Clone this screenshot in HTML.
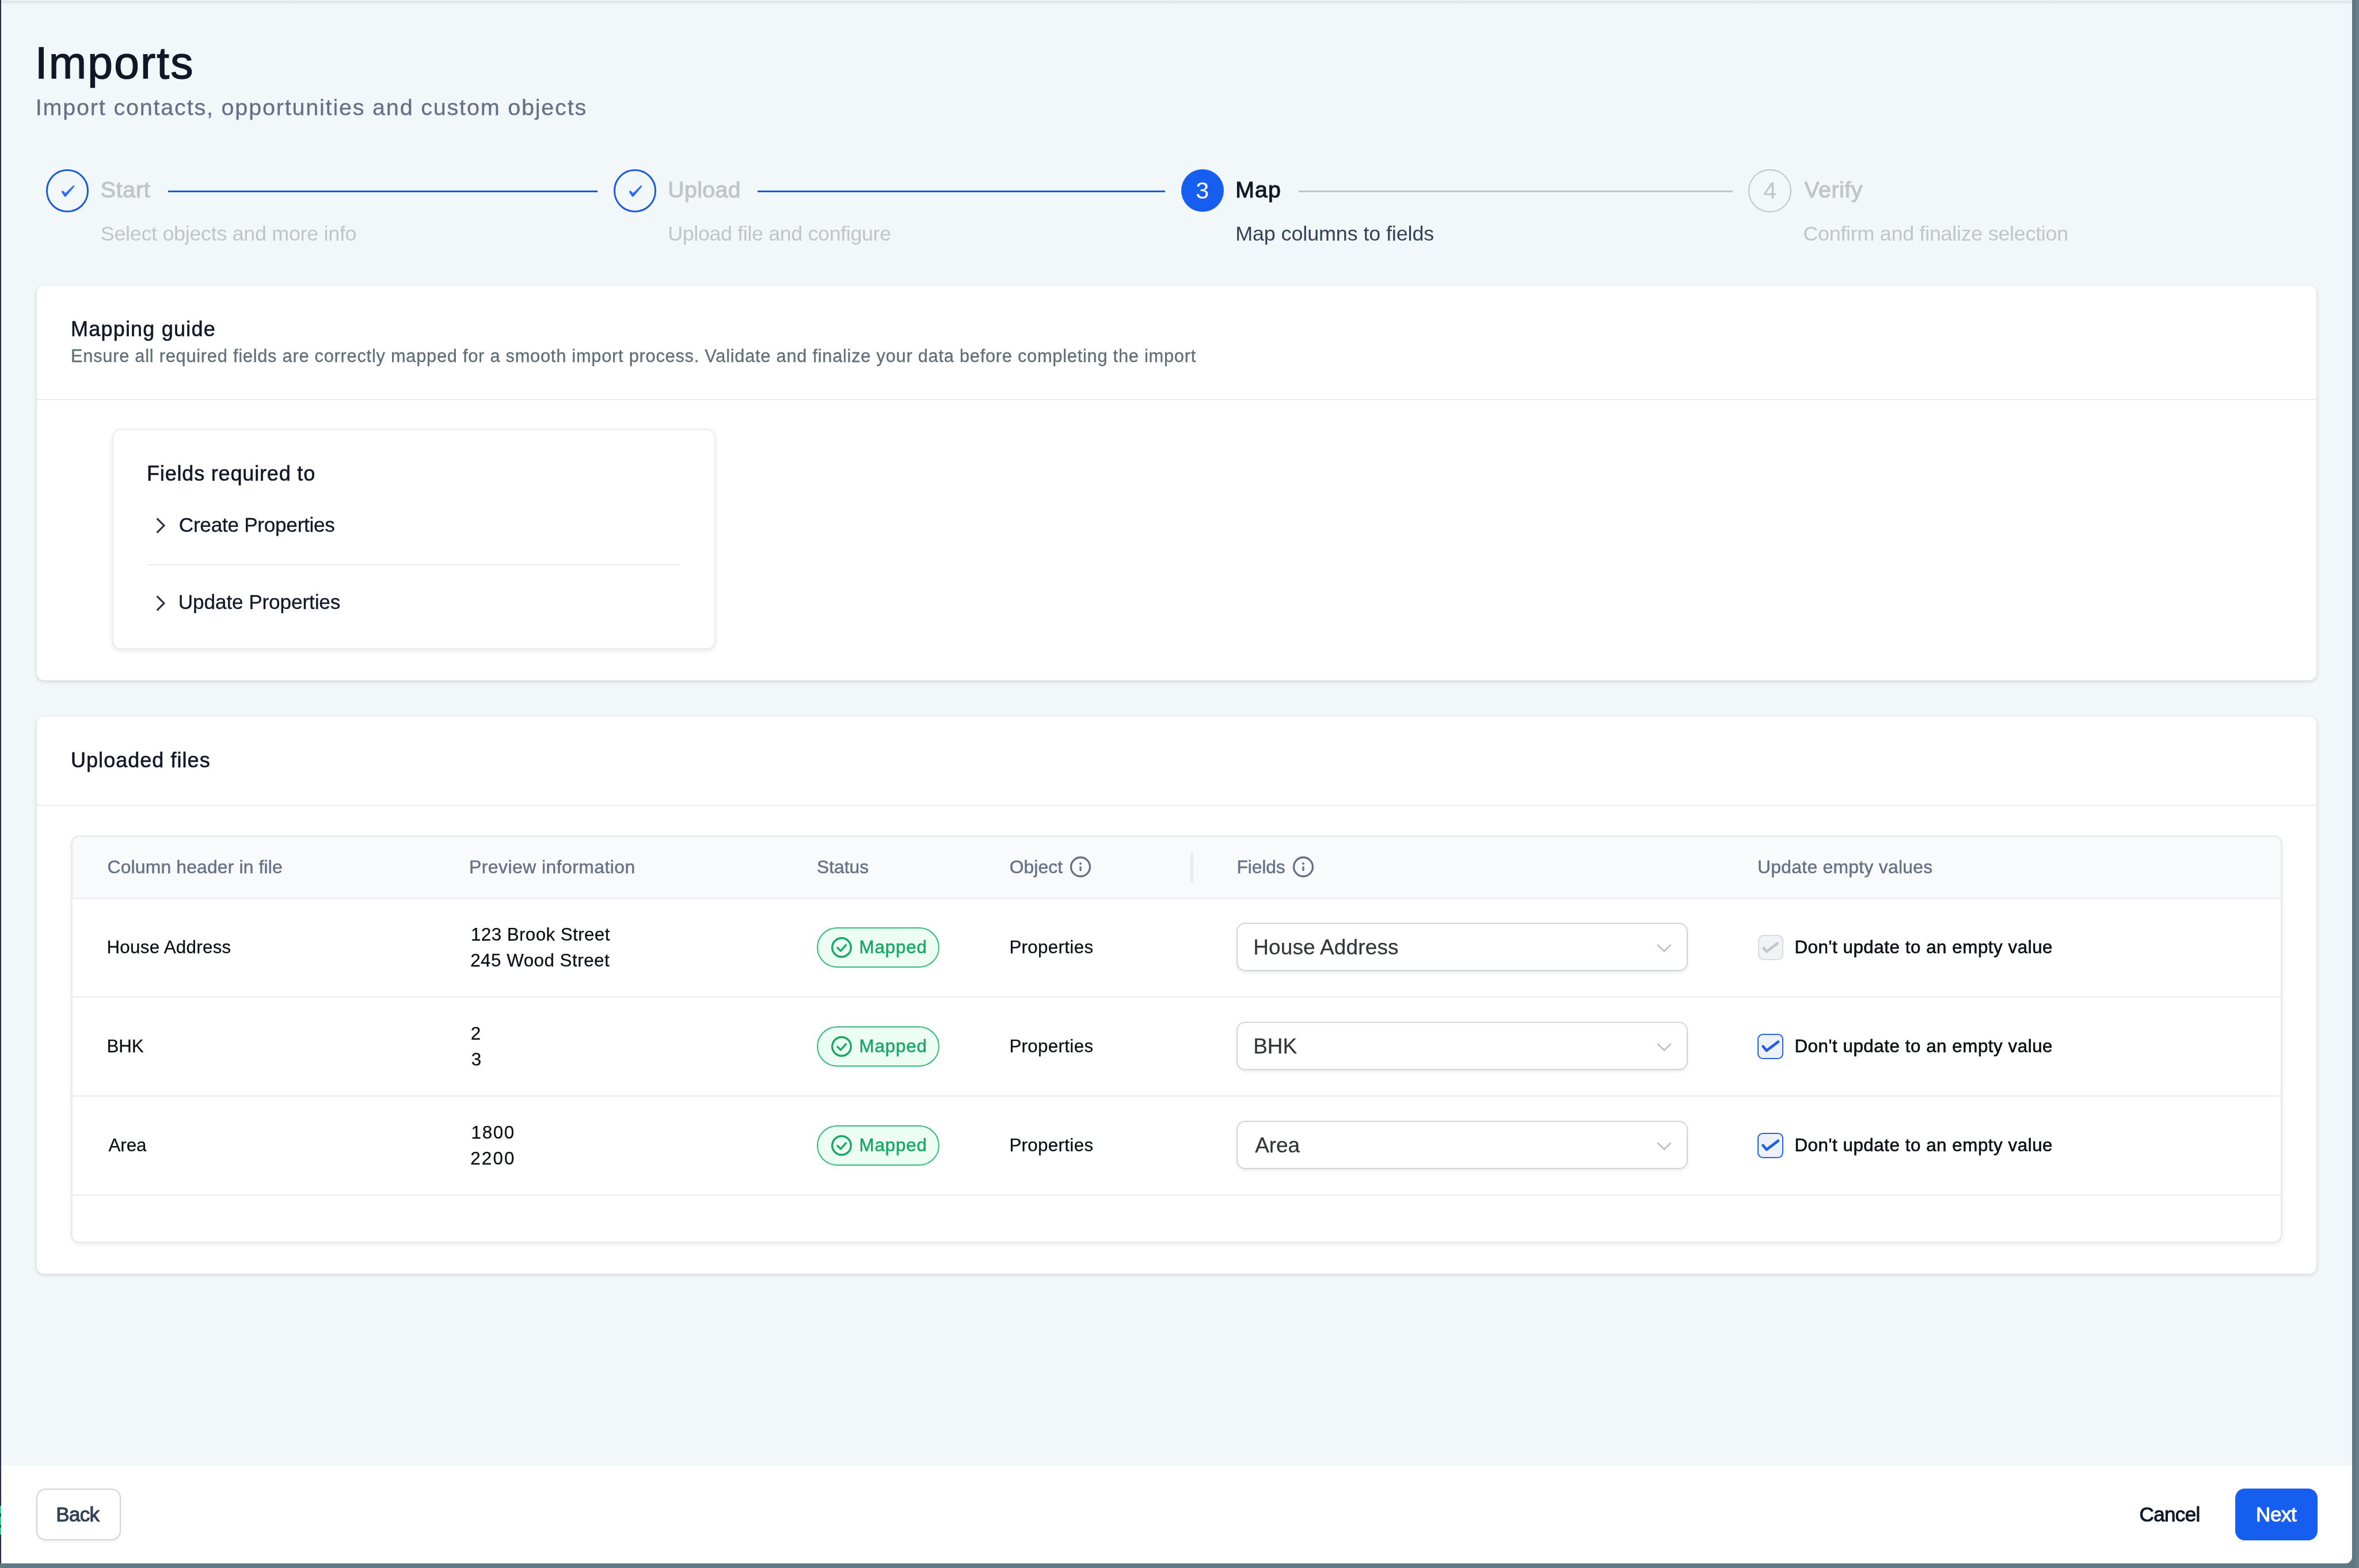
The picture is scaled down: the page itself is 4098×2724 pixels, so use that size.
<!DOCTYPE html>
<html lang="en"><head><meta charset="utf-8"><title>Imports</title>
<style>
html,body{margin:0;padding:0;}
body{width:4098px;height:2724px;overflow:hidden;position:relative;background:linear-gradient(90deg,#5f7a85 0,#5f7a85 4086px,#5a7482 4087px,#68838f 4098px);font-family:"Liberation Sans",Arial,sans-serif;}
.abs,.t,svg{position:absolute;}
.t{white-space:nowrap;display:block;}
#page{left:0;top:0;width:4086px;height:2716px;background:#f2f7fa;border-bottom-right-radius:12px;overflow:hidden;}
.card{background:#fff;border-radius:13px;box-shadow:0 2px 5px rgba(16,24,40,.06),0 2px 8px rgba(16,24,40,.10);}
.hr{background:#eaecf0;}
.circ{border-radius:50%;box-sizing:border-box;}
.sel{box-sizing:border-box;background:#fff;border:2px solid #d1d5db;border-radius:15px;box-shadow:0 3px 5px rgba(16,24,40,.08);}
.badge{box-sizing:border-box;background:#ecfdf3;border:2.5px solid #34ba7b;border-radius:40px;}
.cb{box-sizing:border-box;border-radius:9.5px;}
</style></head><body>
<div id="page" class="abs">
<div class="abs " style="left:0px;top:0px;width:4086px;height:9px;background:linear-gradient(rgba(16,24,40,.11),rgba(16,24,40,0));"></div>
<div class="abs " style="left:0px;top:0px;width:4086px;height:1px;background:#fff;"></div>
<div class="abs circ" style="left:79.6px;top:294px;width:74.5px;height:74.5px;border:3px solid #1a5bd8;"></div>
<svg style="left:100.85px;top:315.25px" width="32" height="32" viewBox="0 0 32 32"><polygon points="6.00,18.20 8.20,16.30 12.50,21.00 26.80,7.20 28.10,8.70 13.30,26.35 11.20,26.35" fill="#2b6cf5" stroke="#2b6cf5" stroke-width="0.8" stroke-linejoin="round"/></svg>
<div class="abs circ" style="left:1065.5px;top:294px;width:74.5px;height:74.5px;border:3px solid #1a5bd8;"></div>
<svg style="left:1086.75px;top:315.25px" width="32" height="32" viewBox="0 0 32 32"><polygon points="6.00,18.20 8.20,16.30 12.50,21.00 26.80,7.20 28.10,8.70 13.30,26.35 11.20,26.35" fill="#2b6cf5" stroke="#2b6cf5" stroke-width="0.8" stroke-linejoin="round"/></svg>
<div class="abs circ" style="left:2051.5px;top:293.7px;width:74.8px;height:74.8px;background:#155eef;"></div>
<div class="abs circ" style="left:3037.3px;top:294px;width:74.5px;height:74.5px;border:2.8px solid #c2c5c8;"></div>
<div class="abs " style="left:292px;top:331px;width:745.5px;height:3px;background:#1a5bd8;"></div>
<div class="abs " style="left:1316px;top:331px;width:707.5px;height:3px;background:#1a5bd8;"></div>
<div class="abs " style="left:2255.8px;top:331px;width:754px;height:3px;background:#c2c5c8;"></div>
<div class="abs card" style="left:63.5px;top:495.5px;width:3960.5px;height:686.5px;"></div>
<div class="abs hr" style="left:63.5px;top:693px;width:3960.5px;height:2px;"></div>
<div class="abs " style="left:194.5px;top:745.3px;width:1048px;height:383px;background:#fff;border:2.2px solid #eaecf0;box-sizing:border-box;border-radius:15px;box-shadow:0 3px 9px rgba(16,24,40,.10);"></div>
<div class="abs hr" style="left:256.3px;top:980.3px;width:925px;height:2px;"></div>
<svg style="left:267.00px;top:895.30px" width="24" height="36" viewBox="0 0 24 36"><path d="M5.6 5.6 L18 18 L5.6 30.4" fill="none" stroke="#2a3142" stroke-width="3.1" stroke-linecap="butt" stroke-linejoin="miter"/></svg>
<svg style="left:267.00px;top:1029.60px" width="24" height="36" viewBox="0 0 24 36"><path d="M5.6 5.6 L18 18 L5.6 30.4" fill="none" stroke="#2a3142" stroke-width="3.1" stroke-linecap="butt" stroke-linejoin="miter"/></svg>
<div class="abs card" style="left:63.5px;top:1244.5px;width:3960.5px;height:968px;"></div>
<div class="abs hr" style="left:63.5px;top:1398px;width:3960.5px;height:2px;"></div>
<div class="abs " style="left:126.1px;top:1454.2px;width:3836px;height:702.8px;background:#fff;border-radius:12px;box-shadow:0 0 0 2.8px #e9eaee,0 3px 8px 2px rgba(16,24,40,.08);overflow:hidden;"></div>
<div class="abs " style="left:126.1px;top:1454.2px;width:3836px;height:106px;background:#f9fafb;border-radius:12px 12px 0 0;"></div>
<div class="abs hr" style="left:126.1px;top:1559.5px;width:3836px;height:2px;"></div>
<div class="abs hr" style="left:126.1px;top:1730.9px;width:3836px;height:2px;"></div>
<div class="abs hr" style="left:126.1px;top:1902.6px;width:3836px;height:2px;"></div>
<div class="abs hr" style="left:126.1px;top:2075.1px;width:3836px;height:2px;"></div>
<div class="abs " style="left:2068.3px;top:1480px;width:4.5px;height:52.7px;background:#ececef;border-radius:2px;"></div>
<svg style="left:1857.10px;top:1485.70px" width="40" height="40" viewBox="0 0 40 40"><circle cx="20" cy="20" r="16.5" fill="none" stroke="#667085" stroke-width="3.3"/><circle cx="20" cy="14.3" r="1.95" fill="#667085"/><path d="M20 19.2 V27.2" stroke="#667085" stroke-width="3.2" stroke-linecap="butt"/></svg>
<svg style="left:2243.80px;top:1485.70px" width="40" height="40" viewBox="0 0 40 40"><circle cx="20" cy="20" r="16.5" fill="none" stroke="#667085" stroke-width="3.3"/><circle cx="20" cy="14.3" r="1.95" fill="#667085"/><path d="M20 19.2 V27.2" stroke="#667085" stroke-width="3.2" stroke-linecap="butt"/></svg>
<div class="abs badge" style="left:1418.9px;top:1611.1px;width:213.6px;height:69.6px;"></div>
<svg style="left:1442.00px;top:1625.90px" width="40" height="40" viewBox="0 0 40 40"><circle cx="20" cy="20" r="16.3" fill="none" stroke="#17a866" stroke-width="3.4"/><path d="M12.9 20.5 L18.4 26 L27.4 15.8" fill="none" stroke="#17a866" stroke-width="3.4" stroke-linecap="round" stroke-linejoin="round"/></svg>
<div class="abs sel" style="left:2148px;top:1603.2px;width:784.3px;height:84.3px;"></div>
<svg style="left:2874.60px;top:1636.90px" width="32" height="20" viewBox="0 0 32 20"><path d="M4.3 4.2 L16 15.6 L27.7 4.2" fill="none" stroke="#b4b8bd" stroke-width="2.4" stroke-linecap="butt" stroke-linejoin="miter"/></svg>
<div class="abs cb" style="left:3053.6px;top:1623.6px;width:44px;height:44.5px;background:#f1f2f6;border:2px solid #d9dbe0;"></div>
<svg style="left:3053.60px;top:1623.90px" width="44" height="44" viewBox="0 0 44 44"><path d="M8.6 21.6 L14.9 29.2 L35 13.8" fill="none" stroke="#c3c5c8" stroke-width="4.6" stroke-linecap="butt" stroke-linejoin="miter"/></svg>
<div class="abs badge" style="left:1418.9px;top:1783.1px;width:213.6px;height:69.6px;"></div>
<svg style="left:1442.00px;top:1797.90px" width="40" height="40" viewBox="0 0 40 40"><circle cx="20" cy="20" r="16.3" fill="none" stroke="#17a866" stroke-width="3.4"/><path d="M12.9 20.5 L18.4 26 L27.4 15.8" fill="none" stroke="#17a866" stroke-width="3.4" stroke-linecap="round" stroke-linejoin="round"/></svg>
<div class="abs sel" style="left:2148px;top:1775.2px;width:784.3px;height:84.3px;"></div>
<svg style="left:2874.60px;top:1808.90px" width="32" height="20" viewBox="0 0 32 20"><path d="M4.3 4.2 L16 15.6 L27.7 4.2" fill="none" stroke="#b4b8bd" stroke-width="2.4" stroke-linecap="butt" stroke-linejoin="miter"/></svg>
<div class="abs cb" style="left:3053.4px;top:1795.6px;width:44.5px;height:44.5px;background:#eef1f9;border:2.5px solid #2462e2;"></div>
<svg style="left:3053.60px;top:1795.90px" width="44" height="44" viewBox="0 0 44 44"><path d="M8.6 21.6 L14.9 29.2 L35 13.8" fill="none" stroke="#1f5fe8" stroke-width="4.6" stroke-linecap="round" stroke-linejoin="round"/></svg>
<div class="abs badge" style="left:1418.9px;top:1955.1px;width:213.6px;height:69.6px;"></div>
<svg style="left:1442.00px;top:1969.90px" width="40" height="40" viewBox="0 0 40 40"><circle cx="20" cy="20" r="16.3" fill="none" stroke="#17a866" stroke-width="3.4"/><path d="M12.9 20.5 L18.4 26 L27.4 15.8" fill="none" stroke="#17a866" stroke-width="3.4" stroke-linecap="round" stroke-linejoin="round"/></svg>
<div class="abs sel" style="left:2148px;top:1947.2px;width:784.3px;height:84.3px;"></div>
<svg style="left:2874.60px;top:1980.90px" width="32" height="20" viewBox="0 0 32 20"><path d="M4.3 4.2 L16 15.6 L27.7 4.2" fill="none" stroke="#b4b8bd" stroke-width="2.4" stroke-linecap="butt" stroke-linejoin="miter"/></svg>
<div class="abs cb" style="left:3053.4px;top:1967.6px;width:44.5px;height:44.5px;background:#eef1f9;border:2.5px solid #2462e2;"></div>
<svg style="left:3053.60px;top:1967.90px" width="44" height="44" viewBox="0 0 44 44"><path d="M8.6 21.6 L14.9 29.2 L35 13.8" fill="none" stroke="#1f5fe8" stroke-width="4.6" stroke-linecap="round" stroke-linejoin="round"/></svg>
<div class="abs " style="left:0px;top:2546px;width:4086px;height:170px;background:#fff;"></div>
<div class="abs " style="left:62.5px;top:2586px;width:147px;height:89.5px;box-sizing:border-box;background:#fff;border:2.2px solid #d0d3da;border-radius:16.5px;box-shadow:0 3px 5px rgba(16,24,40,.05);"></div>
<div class="abs " style="left:3883px;top:2586px;width:143px;height:90px;background:#155eef;border-radius:16.5px;"></div>
<div class="abs " style="left:0px;top:0px;width:2px;height:2716px;background:#272d4a;"></div>
<div class="abs " style="left:0px;top:2615.5px;width:2px;height:50.5px;background:#37d09c;"></div>
<div class="abs " style="left:0px;top:2629px;width:2px;height:5.5px;background:#0b6b4b;"></div>
<div class="abs " style="left:0px;top:2648.5px;width:2px;height:5.5px;background:#0b6b4b;"></div>
<div id="txt" class="abs" style="left:0;top:0;width:4086px;height:2716px;will-change:transform;">
<span class="t " style="left:60.80px;top:70.00px;font-size:78.5px;line-height:78.5px;color:#101828;-webkit-text-stroke:1.4px #101828;letter-spacing:2.167px;">Imports</span>
<span class="t " style="left:61.80px;top:167.00px;font-size:39.5px;line-height:39.5px;color:#667085;-webkit-text-stroke:0.3px #667085;letter-spacing:1.812px;">Import contacts, opportunities and custom objects</span>
<span class="t " style="left:174.80px;top:310.00px;font-size:39.2px;line-height:39.2px;color:#c2c5c8;-webkit-text-stroke:1.1px #c2c5c8;letter-spacing:0.775px;">Start</span>
<span class="t " style="left:174.80px;top:389.00px;font-size:35.9px;line-height:35.9px;color:#c2c5c8;letter-spacing:-0.300px;">Select objects and more info</span>
<span class="t " style="left:1160.20px;top:310.00px;font-size:39.2px;line-height:39.2px;color:#c2c5c8;-webkit-text-stroke:1.1px #c2c5c8;letter-spacing:0.440px;">Upload</span>
<span class="t " style="left:1160.20px;top:389.00px;font-size:35.9px;line-height:35.9px;color:#c2c5c8;letter-spacing:-0.379px;">Upload file and configure</span>
<span class="t " style="left:2146.20px;top:310.00px;font-size:39.2px;line-height:39.2px;color:#101828;-webkit-text-stroke:1.1px #101828;letter-spacing:1.200px;">Map</span>
<span class="t " style="left:2146.20px;top:389.00px;font-size:35.9px;line-height:35.9px;color:#344054;letter-spacing:-0.100px;">Map columns to fields</span>
<span class="t " style="left:3134.60px;top:310.00px;font-size:39.2px;line-height:39.2px;color:#c2c5c8;-webkit-text-stroke:1.1px #c2c5c8;letter-spacing:0.540px;">Verify</span>
<span class="t " style="left:3132.40px;top:389.00px;font-size:35.9px;line-height:35.9px;color:#c2c5c8;letter-spacing:-0.276px;">Confirm and finalize selection</span>
<span class="t " style="left:2077.20px;top:310.00px;font-size:41.5px;line-height:41.5px;color:#fff;">3</span>
<span class="t " style="left:3063.40px;top:311.00px;font-size:41px;line-height:41px;color:#c2c5c8;">4</span>
<span class="t " style="left:123.00px;top:554.00px;font-size:36px;line-height:36px;color:#101828;-webkit-text-stroke:0.6px #101828;letter-spacing:1.208px;">Mapping guide</span>
<span class="t " style="left:123.00px;top:604.00px;font-size:30.8px;line-height:30.8px;color:#5f6d76;-webkit-text-stroke:0.3px #5f6d76;letter-spacing:0.742px;">Ensure all required fields are correctly mapped for a smooth import process. Validate and finalize your data before completing the import</span>
<span class="t " style="left:255.00px;top:805.00px;font-size:36px;line-height:36px;color:#101828;-webkit-text-stroke:0.6px #101828;letter-spacing:0.824px;">Fields required to</span>
<span class="t " style="left:310.80px;top:894.00px;font-size:35.2px;line-height:35.2px;color:#101828;-webkit-text-stroke:0.3px #101828;letter-spacing:-0.287px;">Create Properties</span>
<span class="t " style="left:309.80px;top:1028.00px;font-size:35.2px;line-height:35.2px;color:#101828;-webkit-text-stroke:0.3px #101828;letter-spacing:-0.125px;">Update Properties</span>
<span class="t " style="left:123.00px;top:1303.00px;font-size:36px;line-height:36px;color:#101828;-webkit-text-stroke:0.6px #101828;letter-spacing:1.038px;">Uploaded files</span>
<span class="t " style="left:186.60px;top:1491.00px;font-size:31.8px;line-height:31.8px;color:#667085;-webkit-text-stroke:0.45px #667085;letter-spacing:0.185px;">Column header in file</span>
<span class="t " style="left:815.00px;top:1491.00px;font-size:31.8px;line-height:31.8px;color:#667085;-webkit-text-stroke:0.45px #667085;letter-spacing:0.500px;">Preview information</span>
<span class="t " style="left:1419.00px;top:1491.00px;font-size:31.8px;line-height:31.8px;color:#667085;-webkit-text-stroke:0.45px #667085;">Status</span>
<span class="t " style="left:1753.80px;top:1491.00px;font-size:31.8px;line-height:31.8px;color:#667085;-webkit-text-stroke:0.45px #667085;letter-spacing:0.080px;">Object</span>
<span class="t " style="left:2148.60px;top:1491.00px;font-size:31.8px;line-height:31.8px;color:#667085;-webkit-text-stroke:0.45px #667085;letter-spacing:-0.160px;">Fields</span>
<span class="t " style="left:3053.00px;top:1491.00px;font-size:31.8px;line-height:31.8px;color:#667085;-webkit-text-stroke:0.45px #667085;letter-spacing:0.306px;">Update empty values</span>
<span class="t " style="left:185.40px;top:1630.00px;font-size:31.3px;line-height:31.3px;color:#0a0d12;-webkit-text-stroke:0.25px #0a0d12;letter-spacing:0.300px;">House Address</span>
<span class="t " style="left:818.00px;top:1608.00px;font-size:31.3px;line-height:31.3px;color:#0a0d12;-webkit-text-stroke:0.25px #0a0d12;letter-spacing:0.433px;">123 Brook Street</span>
<span class="t " style="left:817.20px;top:1653.00px;font-size:31.3px;line-height:31.3px;color:#0a0d12;-webkit-text-stroke:0.25px #0a0d12;letter-spacing:0.514px;">245 Wood Street</span>
<span class="t " style="left:1492.60px;top:1630.00px;font-size:31.3px;line-height:31.3px;color:#17a866;-webkit-text-stroke:0.6px #17a866;letter-spacing:0.820px;">Mapped</span>
<span class="t " style="left:1753.40px;top:1630.00px;font-size:31.3px;line-height:31.3px;color:#0a0d12;-webkit-text-stroke:0.25px #0a0d12;letter-spacing:0.333px;">Properties</span>
<span class="t " style="left:2177.20px;top:1628.00px;font-size:36.9px;line-height:36.9px;color:#333639;-webkit-text-stroke:0.25px #333639;letter-spacing:0.175px;">House Address</span>
<span class="t " style="left:3117.40px;top:1630.00px;font-size:31.3px;line-height:31.3px;color:#0a0d12;-webkit-text-stroke:0.6px #0a0d12;letter-spacing:0.548px;">Don't update to an empty value</span>
<span class="t " style="left:185.40px;top:1802.00px;font-size:31.3px;line-height:31.3px;color:#0a0d12;-webkit-text-stroke:0.25px #0a0d12;">BHK</span>
<span class="t " style="left:817.80px;top:1780.00px;font-size:31.3px;line-height:31.3px;color:#0a0d12;-webkit-text-stroke:0.25px #0a0d12;">2</span>
<span class="t " style="left:818.80px;top:1825.00px;font-size:31.3px;line-height:31.3px;color:#0a0d12;-webkit-text-stroke:0.25px #0a0d12;">3</span>
<span class="t " style="left:1492.60px;top:1802.00px;font-size:31.3px;line-height:31.3px;color:#17a866;-webkit-text-stroke:0.6px #17a866;letter-spacing:0.820px;">Mapped</span>
<span class="t " style="left:1753.40px;top:1802.00px;font-size:31.3px;line-height:31.3px;color:#0a0d12;-webkit-text-stroke:0.25px #0a0d12;letter-spacing:0.333px;">Properties</span>
<span class="t " style="left:2177.20px;top:1800.00px;font-size:36.9px;line-height:36.9px;color:#333639;-webkit-text-stroke:0.25px #333639;">BHK</span>
<span class="t " style="left:3117.40px;top:1802.00px;font-size:31.3px;line-height:31.3px;color:#0a0d12;-webkit-text-stroke:0.6px #0a0d12;letter-spacing:0.548px;">Don't update to an empty value</span>
<span class="t " style="left:188.40px;top:1974.00px;font-size:31.3px;line-height:31.3px;color:#0a0d12;-webkit-text-stroke:0.25px #0a0d12;">Area</span>
<span class="t " style="left:818.60px;top:1952.00px;font-size:31.3px;line-height:31.3px;color:#0a0d12;-webkit-text-stroke:0.25px #0a0d12;letter-spacing:1.667px;">1800</span>
<span class="t " style="left:817.20px;top:1997.00px;font-size:31.3px;line-height:31.3px;color:#0a0d12;-webkit-text-stroke:0.25px #0a0d12;letter-spacing:2.200px;">2200</span>
<span class="t " style="left:1492.60px;top:1974.00px;font-size:31.3px;line-height:31.3px;color:#17a866;-webkit-text-stroke:0.6px #17a866;letter-spacing:0.820px;">Mapped</span>
<span class="t " style="left:1753.40px;top:1974.00px;font-size:31.3px;line-height:31.3px;color:#0a0d12;-webkit-text-stroke:0.25px #0a0d12;letter-spacing:0.333px;">Properties</span>
<span class="t " style="left:2180.20px;top:1972.00px;font-size:36.9px;line-height:36.9px;color:#333639;-webkit-text-stroke:0.25px #333639;">Area</span>
<span class="t " style="left:3117.40px;top:1974.00px;font-size:31.3px;line-height:31.3px;color:#0a0d12;-webkit-text-stroke:0.6px #0a0d12;letter-spacing:0.548px;">Don't update to an empty value</span>
<span class="t " style="left:97.20px;top:2613.00px;font-size:35px;line-height:35px;color:#344054;-webkit-text-stroke:1.1px #344054;letter-spacing:-0.633px;">Back</span>
<span class="t " style="left:3716.60px;top:2613.00px;font-size:35px;line-height:35px;color:#101828;-webkit-text-stroke:1.1px #101828;letter-spacing:-0.660px;">Cancel</span>
<span class="t " style="left:3919.00px;top:2613.00px;font-size:35px;line-height:35px;color:#fff;-webkit-text-stroke:1.1px #fff;letter-spacing:-0.400px;">Next</span>
</div>
</div>
</body></html>
